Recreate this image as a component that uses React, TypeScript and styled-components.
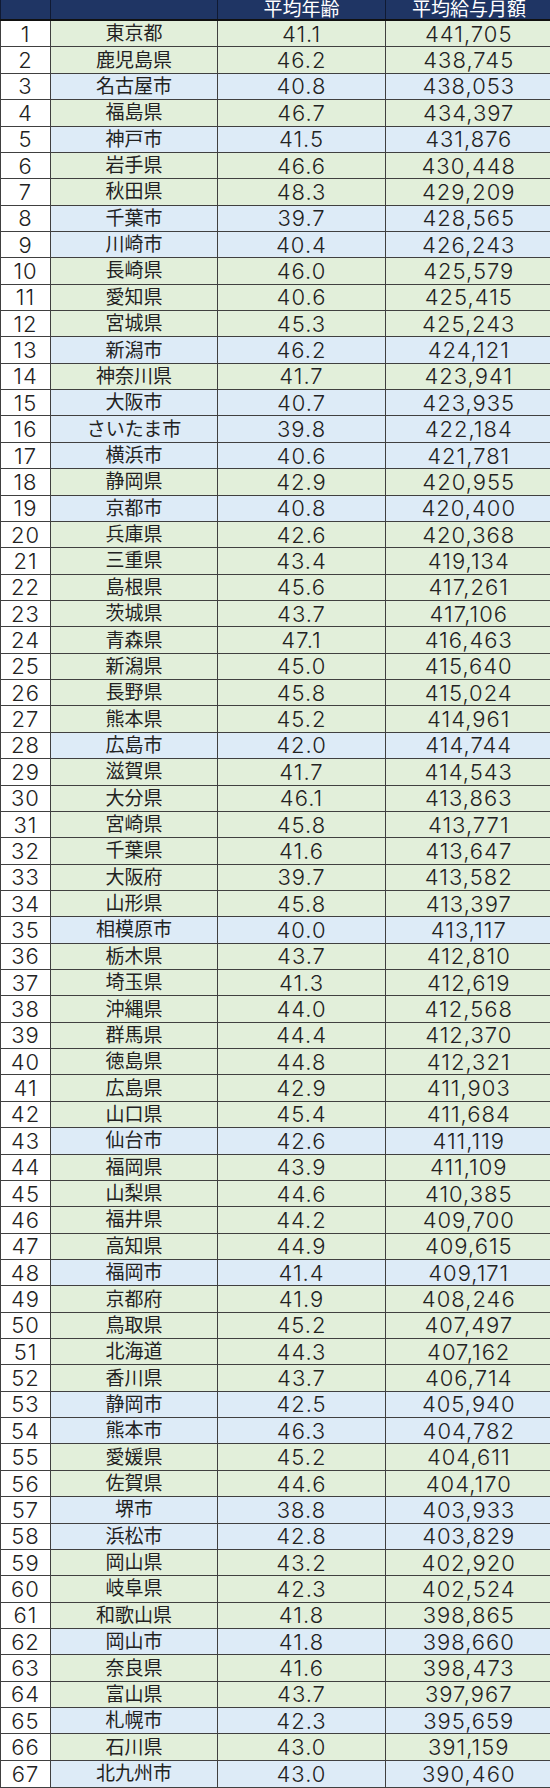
import React from 'react';
import styled, { createGlobalStyle } from 'styled-components';

const GlobalStyle = createGlobalStyle`
	html, body {
		margin: 0;
		padding: 0;
		background: #ffffff;
	}
	body {
		font-family: Inter, "Noto Sans CJK JP", sans-serif;
	}
`;

type Row = [string, string, string];

// 市 rows are shaded blue, the prefectures green
const rows: Row[] = [
	['東京都', '41.1', '441,705'],
	['鹿児島県', '46.2', '438,745'],
	['名古屋市', '40.8', '438,053'],
	['福島県', '46.7', '434,397'],
	['神戸市', '41.5', '431,876'],
	['岩手県', '46.6', '430,448'],
	['秋田県', '48.3', '429,209'],
	['千葉市', '39.7', '428,565'],
	['川崎市', '40.4', '426,243'],
	['長崎県', '46.0', '425,579'],
	['愛知県', '40.6', '425,415'],
	['宮城県', '45.3', '425,243'],
	['新潟市', '46.2', '424,121'],
	['神奈川県', '41.7', '423,941'],
	['大阪市', '40.7', '423,935'],
	['さいたま市', '39.8', '422,184'],
	['横浜市', '40.6', '421,781'],
	['静岡県', '42.9', '420,955'],
	['京都市', '40.8', '420,400'],
	['兵庫県', '42.6', '420,368'],
	['三重県', '43.4', '419,134'],
	['島根県', '45.6', '417,261'],
	['茨城県', '43.7', '417,106'],
	['青森県', '47.1', '416,463'],
	['新潟県', '45.0', '415,640'],
	['長野県', '45.8', '415,024'],
	['熊本県', '45.2', '414,961'],
	['広島市', '42.0', '414,744'],
	['滋賀県', '41.7', '414,543'],
	['大分県', '46.1', '413,863'],
	['宮崎県', '45.8', '413,771'],
	['千葉県', '41.6', '413,647'],
	['大阪府', '39.7', '413,582'],
	['山形県', '45.8', '413,397'],
	['相模原市', '40.0', '413,117'],
	['栃木県', '43.7', '412,810'],
	['埼玉県', '41.3', '412,619'],
	['沖縄県', '44.0', '412,568'],
	['群馬県', '44.4', '412,370'],
	['徳島県', '44.8', '412,321'],
	['広島県', '42.9', '411,903'],
	['山口県', '45.4', '411,684'],
	['仙台市', '42.6', '411,119'],
	['福岡県', '43.9', '411,109'],
	['山梨県', '44.6', '410,385'],
	['福井県', '44.2', '409,700'],
	['高知県', '44.9', '409,615'],
	['福岡市', '41.4', '409,171'],
	['京都府', '41.9', '408,246'],
	['鳥取県', '45.2', '407,497'],
	['北海道', '44.3', '407,162'],
	['香川県', '43.7', '406,714'],
	['静岡市', '42.5', '405,940'],
	['熊本市', '46.3', '404,782'],
	['愛媛県', '45.2', '404,611'],
	['佐賀県', '44.6', '404,170'],
	['堺市', '38.8', '403,933'],
	['浜松市', '42.8', '403,829'],
	['岡山県', '43.2', '402,920'],
	['岐阜県', '42.3', '402,524'],
	['和歌山県', '41.8', '398,865'],
	['岡山市', '41.8', '398,660'],
	['奈良県', '41.6', '398,473'],
	['富山県', '43.7', '397,967'],
	['札幌市', '42.3', '395,659'],
	['石川県', '43.0', '391,159'],
	['北九州市', '43.0', '390,460'],
];

const Table = styled.table`
	width: 548px;
	height: 1788px;
	table-layout: fixed;
	border-collapse: collapse;
	color: #222222;
`;

const Head = styled.th<{ $w: number }>`
	width: ${(p) => p.$w}px;
	background: #1f3564;
	color: #ffffff;
	font-weight: 400;
	font-size: 19px;
	padding: 0;
	border-left: 1px solid #101a33;
	border-bottom: 2px solid #111111;
	text-align: center;
	line-height: 1;
`;

const Cell = styled.td<{ $bg: string; $num?: boolean }>`
	background: ${(p) => p.$bg};
	padding: 0;
	text-align: center;
	border: 1px solid #404040;
	font-size: ${(p) => (p.$num ? '22px' : '19px')};
	font-weight: ${(p) => (p.$num ? 350 : 400)};
	letter-spacing: ${(p) => (p.$num ? '1px' : '0')};
	line-height: 1;
	white-space: nowrap;
`;

const GREEN = '#e2efda';
const BLUE = '#ddebf7';

export default function App() {
	return (
		<>
			<GlobalStyle />
			<Table>
				<thead>
					<tr>
						<Head $w={49} />
						<Head $w={166} />
						<Head $w={167}>平均年齢</Head>
						<Head $w={166}>平均給与月額</Head>
					</tr>
				</thead>
				<tbody>
					{rows.map(([name, age, pay], i) => {
						const bg = name.endsWith('市') ? BLUE : GREEN;
						return (
							<tr key={name}>
								<Cell $bg="#ffffff" $num>
									{i + 1}
								</Cell>
								<Cell $bg={bg}>{name}</Cell>
								<Cell $bg={bg} $num>
									{age}
								</Cell>
								<Cell $bg={bg} $num>
									{pay}
								</Cell>
							</tr>
						);
					})}
				</tbody>
			</Table>
		</>
	);
}
